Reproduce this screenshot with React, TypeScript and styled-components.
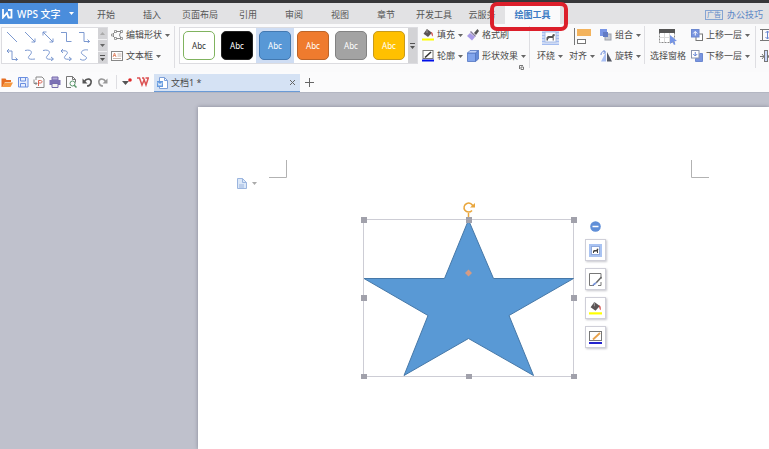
import React from 'react';
import styled, { createGlobalStyle } from 'styled-components';

const GlobalStyle = createGlobalStyle`
  * { box-sizing: border-box; }
  body {
    margin: 0;
    overflow: hidden;
    font-family: "Noto Sans", "Noto Sans CJK SC", sans-serif;
    font-size: 9px;
    line-height: 12px;
    color: #4a4a4a;
  }
  button {
    font: inherit;
    color: inherit;
    border: 0;
    padding: 0;
    margin: 0;
    background: none;
    cursor: pointer;
    white-space: nowrap;
  }
  svg { display: block; flex: none; }
`;

const Window = styled.div`
  display: flex;
  flex-direction: column;
  min-height: 100vh;
  overflow: hidden;
  background: #bfc1cc;
`;

const TabBar = styled.nav`
  display: flex;
  height: 24px;
  border-top: 3px solid #373739;
  background: #e2e2e4;
`;

const AppButton = styled.button`
  display: flex;
  align-items: center;
  gap: 4px;
  width: 78px;
  flex: none;
  padding-left: 2px;
  background: #4a8ddc;
  color: #fff;
  font-size: 10px;
  font-weight: 500;
`;

const AppName = styled.span`
  flex: 1;
  text-align: left;
`;

const AppArrow = styled.span`
  width: 9px;
`;

const Tabs = styled.div`
  display: flex;
  flex: 1;
  padding-left: 5px;
`;

const Tab = styled.button<{ $w: number; $active?: boolean }>`
  position: relative;
  width: ${p => p.$w}px;
  height: 21px;
  padding-top: 2px;
  color: ${p => (p.$active ? '#3d7cc4' : '#555')};
  font-weight: ${p => (p.$active ? 700 : 400)};
  background: ${p => (p.$active ? '#fafafb' : 'none')};
`;

const Marker = styled.span`
  position: absolute;
  z-index: 2;
  left: -15px;
  top: -1px;
  width: 78px;
  height: 29px;
  border: 4px solid #dc1f2b;
  border-radius: 7px;
  pointer-events: none;
`;

const Promo = styled.a`
  display: flex;
  align-items: center;
  gap: 4px;
  padding: 2px 6px 0 0;
  color: #5c86c6;
  text-decoration: none;
  white-space: nowrap;
`;

const PromoTag = styled.span`
  padding: 0 1px;
  border: 1px solid #86a5d3;
  font-size: 7px;
  line-height: 8px;
`;

const Ribbon = styled.section`
  display: flex;
  align-items: flex-start;
  height: 48px;
  padding: 2px 0 0 1px;
  overflow: hidden;
  background: #fafafb;
`;

const Gallery = styled.div`
  display: flex;
  flex: none;
  height: 37px;
  margin-top: 1px;
  border: 1px solid #dcdce0;
  background: #fff;
`;

const ConnectorGrid = styled.div`
  display: grid;
  grid-template-columns: repeat(5, 18px);
  grid-template-rows: 18px 18px;
  width: 96px;
  padding-left: 1px;
`;

const ConnectorButton = styled.button`
  display: grid;
  place-items: center;
`;

const Scroller = styled.div`
  display: grid;
  grid-auto-rows: 1fr;
  gap: 1px;
  width: 9px;
  background: #f1f1f3;
`;

const ScrollButton = styled.button`
  display: grid;
  place-items: center;
  background: #d3d3d6;
`;

const Divider = styled.span<{ $h?: number }>`
  flex: none;
  width: 1px;
  height: ${p => p.$h ?? 42}px;
  background: #dedee2;
`;

const Stack = styled.div<{ $ml?: number; $mr?: number }>`
  display: grid;
  flex: none;
  grid-auto-rows: 20px;
  row-gap: 1px;
  align-content: start;
  justify-items: start;
  margin-left: ${p => p.$ml ?? 4}px;
  margin-right: ${p => p.$mr ?? 4}px;
`;

const Command = styled.button`
  display: flex;
  align-items: center;
  gap: 3px;
  height: 18px;
`;

const BigCommand = styled.button<{ $ml: number }>`
  display: grid;
  flex: none;
  grid-template-rows: 20px 18px;
  row-gap: 1px;
  justify-items: center;
  align-items: center;
  margin-left: ${p => p.$ml}px;
`;

const BigLabel = styled.span`
  display: flex;
  align-items: center;
  gap: 3px;
`;

const Swatch = styled.button<{ $fill: string; $edge: string; $ink?: string }>`
  width: 32px;
  height: 29px;
  border: 1px solid ${p => p.$edge};
  border-radius: 5px;
  background: ${p => p.$fill};
  color: ${p => p.$ink ?? '#fff'};
  font-size: 8px;
`;

const SwatchCell = styled.div<{ $selected?: boolean }>`
  display: grid;
  place-items: center;
  width: 38px;
  background: ${p => (p.$selected ? '#cfddf3' : 'transparent')};
`;

const EffectsGroup = styled.div`
  display: flex;
  flex: none;
  flex-direction: column;
  align-items: flex-end;
  width: 111px;
  padding: 0 5px 0 4px;
`;

const EffectsGrid = styled.div`
  display: grid;
  grid-template-columns: 45px 57px;
  grid-template-rows: 20px 18px;
  row-gap: 1px;
`;

const Launcher = styled.button`
  width: 5px;
  height: 5px;
`;

const DocBar = styled.div`
  display: flex;
  align-items: center;
  height: 20px;
  background: #fbfbfc;
`;

const QuickTools = styled.div`
  display: flex;
  align-items: center;
  gap: 4px;
  padding-left: 1px;
  width: 114px;
  flex: none;
`;

const QuickMenu = styled.div`
  display: flex;
  align-items: center;
  justify-content: space-between;
  width: 40px;
  flex: none;
  padding: 0 5px 0 2px;
`;

const DocTab = styled.div`
  display: flex;
  align-items: center;
  gap: 3px;
  width: 146px;
  height: 18px;
  margin-top: 2px;
  padding: 0 4px 0 3px;
  border-bottom: 1px solid #6a9ad6;
  background: #d5e2f4;
`;

const DocName = styled.span`
  flex: 1;
`;

const AddTab = styled.button`
  margin-left: 5px;
`;

const Workspace = styled.main`
  display: flex;
  flex: 1;
  padding: 14px 0 0 198px;
  border-top: 1px solid #b3b6c2;
`;

const Sheet = styled.article`
  position: relative;
  flex: 1;
  background: #fff;
  box-shadow: 0 0 4px #858896;
`;

const Placed = styled.div<{ $x: number; $y: number }>`
  position: absolute;
  left: ${p => p.$x}px;
  top: ${p => p.$y}px;
`;

const PasteOptions = styled.button`
  display: flex;
  align-items: center;
  gap: 5px;
`;

const FloatTools = styled.div`
  display: flex;
  flex-direction: column;
  align-items: center;
  gap: 7px;
`;

const FloatButton = styled.button`
  display: grid;
  place-items: center;
  width: 21px;
  height: 22px;
  border: 1px solid #cfcfd8;
  background: #fff;
  box-shadow: 1px 1px 2px #c8c8ce;
`;

const Collapse = styled.button`
  width: 11px;
  height: 11px;
`;

const Caret = ({ color = '#666' }: { color?: string }) => (
  <svg width="5" height="3" viewBox="0 0 5 3"><path d="M0 0h5L2.500 3z" fill={color} /></svg>
);

const MoreArrow = () => (
  <svg width="5" height="6" viewBox="0 0 5 6" fill="#555"><path d="M0 0h5v1H0zM0 3h5L2.500 6z" /></svg>
);

const connectors = [
  { name: '直线', d: 'M1 1L11 11' },
  { name: '箭头', d: 'M1 1L11 11M11 7.500V11H7.500' },
  { name: '双箭头', d: 'M1 1L11 11M11 7.500V11H7.500M1 4.500V1H4.500' },
  { name: '肘形', d: 'M1 1.500H6.500V10.500H11.500' },
  { name: '肘形箭头', d: 'M1 1.500H6V10.500H11.500M9.500 8.500L11.500 10.500L9.500 12' },
  { name: '肘形双箭头', d: 'M1 2H6V10.500H11.500M9.500 8.500L11.500 10.500L9.500 12M3 0L1 2L3 4' },
  { name: '曲线', d: 'M1 1.500C7 0 9 3 6 6S4 11 11 10' },
  { name: '曲线箭头', d: 'M1 1.500C7 0 9 3 6 6S4 11 11 10M9 8L11.500 10L9 12' },
  { name: '曲线双箭头', d: 'M1 2C7 1 9 3 6 6S4 11 11 10M9 8L11.500 10L9 12M3 0L1 2L3 4' },
  { name: '自由曲线', d: 'M10 1C5 0 2 3 4 5S10 8 8 10S3 11 2 10' },
];

const WrapIcon = () => (
  <svg width="17" height="17" viewBox="0 0 17 17">
    <path d="M0 1.500h17M0 4.500h17M0 7.500h17M0 10.500h17M0 13.500h17M0 16.500h17" stroke="#a3bcf0" strokeWidth="2" />
    <rect x="3" y="4" width="11" height="10" fill="#fff" stroke="#a9bde6" />
    <path d="M4.500 12.500V9.500L6 8h4l1-2 2 .5-.5 1.500-.8.500v4h-1V10H7.500L6 11v1.500z" fill="#555" />
  </svg>
);

const WrapSmallIcon = () => (
  <svg width="13" height="13" viewBox="0 0 13 13">
    <rect x="1" y="1" width="11" height="11" fill="#fff" stroke="#a9c3f2" strokeWidth="2" />
    <rect x="2.500" y="2.500" width="8" height="8" fill="#fff" stroke="#8fa9dc" />
    <path d="M4 9V7l1-1h2.500L8 4.500l1.500.5L9 6v3H8V7.500H6L5 8v1z" fill="#444" />
  </svg>
);

const BucketIcon = ({ size = 12 }: { size?: number }) => (
  <svg width={size} height={size} viewBox="0 0 12 12">
    <path d="M5 0l5 3.800L6 8 1.500 4.800z" fill="#5b5555" />
    <path d="M5 0v4" stroke="#999" />
    <path d="M9 3c2 .5 2 2 1.800 4.500C9.500 7 9.500 5 9 3z" fill="#d34d49" />
    <path d="M0 10.500h12" stroke="#ff0" strokeWidth="2" />
  </svg>
);

const OutlineIcon = () => (
  <svg width="12" height="12" viewBox="0 0 12 12">
    <rect x="1" y=".5" width="10" height="8" fill="#fff" stroke="#777" />
    <path d="M3 7.500L9 2" stroke="#333" strokeWidth="1.600" />
    <path d="M0 10.500h12" stroke="#0010e8" strokeWidth="2" />
  </svg>
);

const BrushIcon = () => (
  <svg width="12" height="12" viewBox="0 0 12 12">
    <path d="M7 4L10.500 0L12 2L9 6z" fill="#555" />
    <path d="M4 2l5 5-1 1-5-5z" fill="#857d9c" />
    <path d="M3 4l5 4-3 3.500L0 7z" fill="#a99be8" />
  </svg>
);

const CubeIcon = () => (
  <svg width="12" height="12" viewBox="0 0 12 12" stroke="#5376c2" strokeWidth=".8">
    <path d="M.5 3h8v8.500h-8z" fill="#82a5ec" />
    <path d="M.5 3L3 .5h8.500L8.500 3z" fill="#c1d3fa" />
    <path d="M8.500 3l3-2.500V9l-3 2.500z" fill="#658bd8" />
  </svg>
);

const EditShapeIcon = () => (
  <svg width="12" height="12" viewBox="0 0 12 12" fill="none" stroke="#777" strokeWidth=".9">
    <path d="M1 6l3.500-3.500H10L8.500 6 10 9.500H4.500z" />
    <path d="M3.500 1.500h2v2h-2zM3.500 8.500h2v2h-2zM9.500 1.500h2v2h-2zM9.500 8.500h2v2h-2zM.5 5h2v2h-2z" fill="#fafafb" strokeWidth=".7" />
  </svg>
);

const TextBoxIcon = () => (
  <svg width="12" height="12" viewBox="0 0 12 12" fill="none">
    <rect x=".5" y="1.500" width="11" height="9" fill="#fff" stroke="#888" />
    <path d="M2 7l1.500-4L5 7M2.500 5.500h2" stroke="#e28b6c" />
    <path d="M6.500 4h4M6.500 6h4M2 8.500h8" stroke="#c8b8b0" />
  </svg>
);

const AlignIcon = () => (
  <svg width="17" height="17" viewBox="0 0 17 17">
    <path d="M.5 0v17" stroke="#777" />
    <rect x="3" y="1" width="14" height="7" fill="#f3b35d" />
    <rect x="3.500" y="11.500" width="8" height="4" fill="#fff" stroke="#777" />
  </svg>
);

const GroupIcon = () => (
  <svg width="12" height="12" viewBox="0 0 12 12">
    <rect x="0" y="0" width="7" height="7" fill="#7995e6" />
    <rect x="5" y="5" width="6" height="6" fill="#c9ccd3" stroke="#9ca0aa" />
    <rect x="3" y="3" width="5" height="5" fill="#627bc4" />
  </svg>
);

const RotateIcon = () => (
  <svg width="12" height="12" viewBox="0 0 12 12">
    <path d="M6 2v9.500H1z" fill="#a9bff4" />
    <path d="M7 2l5 9.500H7z" fill="#535762" />
    <path d="M1 5c0-3 2-4 4-3M3.500 0L5.500 2L3.500 4" fill="none" stroke="#6687d7" />
  </svg>
);

const PaneIcon = () => (
  <svg width="18" height="17" viewBox="0 0 18 17">
    <rect x=".5" y="1.500" width="15" height="13" fill="#fff" stroke="#888" strokeDasharray="2 1" />
    <path d="M0 1h16v4H0z" fill="#555" />
    <path d="M5.500 5v9M10.500 5v9M1 9.500h14" stroke="#dadada" />
    <path d="M11 7l7 6-3 .3 1.500 3-1.500.7-1.500-3-2.500 2z" fill="#7695e6" />
  </svg>
);

const LayerIcon = ({ down }: { down?: boolean }) => (
  <svg width="12" height="12" viewBox="0 0 12 12">
    {down && <path d="M8.500 3.500h3v8h-7v-3" fill="#7894e0" stroke="#6c88d0" />}
    {!down && <rect x="5" y="5" width="6.500" height="6.500" fill="#fff" stroke="#777" />}
    <rect x=".5" y=".5" width="7.500" height="7.500" fill={down ? '#fff' : '#7894e0'} stroke={down ? '#8a94ac' : '#6c88d0'} />
    <path d={down ? 'M4.250 2v4M2.250 4l2 2 2-2' : 'M2.250 4.500l2-2 2 2M4.250 2.500v4'} fill="none" stroke={down ? '#6685d5' : '#fff'} />
  </svg>
);

const HeightIcon = () => (
  <svg width="12" height="12" viewBox="0 0 12 12" fill="none" stroke="#777">
    <path d="M0 .5h12M0 11.500h12M2.500 1v10" />
    <path d="M7.500 2v8M5.500 4l2-2 2 2M5.500 8l2 2 2-2" stroke="#6786d0" />
  </svg>
);

const WidthIcon = () => (
  <svg width="12" height="12" viewBox="0 0 12 12" fill="none" stroke="#777">
    <path d="M0 6.500h4M8 6.500h4M2 4l2 2.500L2 9M10 4L8 6.500L10 9" />
    <rect x="4.500" y=".5" width="3" height="11" fill="#cad8fa" />
  </svg>
);

const OpenIcon = () => (
  <svg width="12" height="12" viewBox="0 0 12 12">
    <path d="M.5 11V2.500h4l1 1.500H10v2H4L1.500 11z" fill="#e56e22" />
    <path d="M3.500 6.500H12L9.500 11h-8z" fill="#f6973e" />
  </svg>
);
const SaveIcon = () => (
  <svg width="12" height="12" viewBox="0 0 12 12" fill="none" stroke="#6b8fe0">
    <path d="M1.500 1.500h9l.5 1v8.500H1.500z" fill="#e8effd" /><path d="M3.500 1.500V5h5V1.500M3.500 11V7.500h5V11" />
  </svg>
);
const PdfIcon = () => (
  <svg width="12" height="12" viewBox="0 0 12 12" fill="none" stroke="#888">
    <path d="M3 4V1h6l2 2v8.500H3" /><path d="M5.500 10V4.500h2c2 0 2 2.500 0 2.500h-2" stroke="#dc6250" /><path d="M1 3.500v4h3M2.500 6L4 7.500 2.500 9" />
  </svg>
);
const PrintIcon = () => (
  <svg width="12" height="12" viewBox="0 0 12 12">
    <path d="M3 1h6v3H3z" fill="#b4abd9" stroke="#766bac" /><path d="M.5 4h11v5H.5z" fill="#7b70b4" /><path d="M3 7.500h6v4H3z" fill="#eee" stroke="#766bac" />
  </svg>
);
const PreviewIcon = () => (
  <svg width="12" height="12" viewBox="0 0 12 12" fill="none" stroke="#777">
    <path d="M6 11.500H1.500V.5h6l3 3v3M7.500.5v3h3" /><circle cx="7.500" cy="7.500" r="2.500" stroke="#5a966b" /><path d="M9 9l2.500 2.500" stroke="#5a966b" strokeWidth="1.500" />
  </svg>
);
const UndoIcon = ({ redo }: { redo?: boolean }) => (
  <svg width="12" height="12" viewBox="0 0 12 12">
    <g transform={redo ? 'translate(12 0) scale(-1 1)' : undefined}>
      <path d="M3 6C6 1 11 3 10 7c-.4 1.700-2 3-4 3" fill="none" stroke={redo ? '#999' : '#555'} strokeWidth="1.600" />
      <path d="M1.500 2.500v5h5z" fill={redo ? '#999' : '#555'} />
    </g>
  </svg>
);

const fileTools = [
  { name: '打开', icon: <OpenIcon /> },
  { name: '保存', icon: <SaveIcon /> },
  { name: '输出为PDF', icon: <PdfIcon /> },
  { name: '打印', icon: <PrintIcon /> },
  { name: '打印预览', icon: <PreviewIcon /> },
  { name: '撤销', icon: <UndoIcon /> },
  { name: '恢复', icon: <UndoIcon redo /> },
];

const DocumentIcon = () => (
  <svg width="11" height="12" viewBox="0 0 11 12">
    <path d="M2.500.5h5l3 3v8h-8z" fill="#fff" stroke="#7d9fd8" /><path d="M7.500.5v3h3" fill="none" stroke="#7d9fd8" />
    <path d="M0 4h6v6H0z" fill="#659be0" /><path d="M1 5.500l1 3 1-2 1 2 1-3" fill="none" stroke="#fff" strokeWidth=".8" />
  </svg>
);

const tabs = [
  { label: '开始', w: 46 }, { label: '插入', w: 46 }, { label: '页面布局', w: 50 },
  { label: '引用', w: 46 }, { label: '审阅', w: 46 }, { label: '视图', w: 46 },
  { label: '章节', w: 46 }, { label: '开发工具', w: 50 }, { label: '云服务', w: 46 },
];

const swatches = [
  { fill: '#fff', edge: '#80b35f', ink: '#333' },
  { fill: '#000', edge: '#222' },
  { fill: '#5898d6', edge: '#4379b1', selected: true },
  { fill: '#ef7b2e', edge: '#bb6429' },
  { fill: '#a3a3a3', edge: '#828282' },
  { fill: '#ffc000', edge: '#c79a1c' },
];

const handles = [[3, 3], [108, 3], [213, 3], [3, 81], [213, 81], [3, 160], [108, 160], [213, 160]];

const Item = ({ icon, label, menu = true }: { icon: React.ReactNode; label: string; menu?: boolean }) => (
  <Command>{icon}<span>{label}</span>{menu && <Caret />}</Command>
);

export default function App() {
  return (
    <Window>
      <GlobalStyle />
      <TabBar>
        <AppButton>
          <svg width="11" height="10" viewBox="0 0 11 10" fill="none" stroke="#fff" strokeWidth="1.800">
            <path d="M1 0v8.500L5 4l1.500 4.500H9.500V1H6" />
          </svg>
          <AppName>WPS 文字</AppName>
          <AppArrow><Caret color="#fff" /></AppArrow>
        </AppButton>
        <Tabs>
          {tabs.map(t => <Tab key={t.label} $w={t.w}>{t.label}</Tab>)}
          <Tab $w={55} $active>绘图工具<Marker /></Tab>
        </Tabs>
        <Promo href="#tips"><PromoTag>广告</PromoTag>办公技巧</Promo>
      </TabBar>

      <Ribbon>
        <Gallery>
          <ConnectorGrid>
            {connectors.map(c => (
              <ConnectorButton key={c.name} aria-label={c.name}>
                <svg width="12" height="12" viewBox="0 0 12 12" fill="none" stroke="#6d8dcb" strokeWidth=".9"><path d={c.d} /></svg>
              </ConnectorButton>
            ))}
          </ConnectorGrid>
          <Scroller>
            <ScrollButton aria-label="向上"><svg width="5" height="3" viewBox="0 0 5 3"><path d="M0 3h5L2.500 0z" fill="#aaa" /></svg></ScrollButton>
            <ScrollButton aria-label="向下"><Caret /></ScrollButton>
            <ScrollButton aria-label="更多形状"><MoreArrow /></ScrollButton>
          </Scroller>
        </Gallery>
        <Stack $ml={3} $mr={4}>
          <Item icon={<EditShapeIcon />} label="编辑形状" />
          <Item icon={<TextBoxIcon />} label="文本框" />
        </Stack>
        <Divider />
        <Stack $ml={4} $mr={0}>
          <Gallery>
            {swatches.map(s => (
              <SwatchCell key={s.fill} $selected={s.selected}>
                <Swatch $fill={s.fill} $edge={s.edge} $ink={s.ink}>Abc</Swatch>
              </SwatchCell>
            ))}
            <Scroller><ScrollButton aria-label="更多样式"><MoreArrow /></ScrollButton></Scroller>
          </Gallery>
        </Stack>
        <EffectsGroup>
          <EffectsGrid>
            <Item icon={<BucketIcon />} label="填充" />
            <Item icon={<BrushIcon />} label="格式刷" menu={false} />
            <Item icon={<OutlineIcon />} label="轮廓" />
            <Item icon={<CubeIcon />} label="形状效果" />
          </EffectsGrid>
          <Launcher aria-label="设置形状格式">
            <svg width="5" height="5" viewBox="0 0 5 5" fill="none" stroke="#777"><path d="M.5 4V.5H4M2 2h2.500v2.500H2z" /></svg>
          </Launcher>
        </EffectsGroup>
        <Divider />
        <BigCommand $ml={7}><WrapIcon /><BigLabel>环绕<Caret /></BigLabel></BigCommand>
        <BigCommand $ml={6}><AlignIcon /><BigLabel>对齐<Caret /></BigLabel></BigCommand>
        <Stack $ml={5} $mr={3}>
          <Item icon={<GroupIcon />} label="组合" />
          <Item icon={<RotateIcon />} label="旋转" />
        </Stack>
        <Divider $h={38} />
        <BigCommand $ml={5}><PaneIcon /><BigLabel>选择窗格</BigLabel></BigCommand>
        <Stack $ml={5} $mr={5}>
          <Item icon={<LayerIcon />} label="上移一层" />
          <Item icon={<LayerIcon down />} label="下移一层" />
        </Stack>
        <Divider />
        <Stack $ml={4}>
          <Command aria-label="高度"><HeightIcon /></Command>
          <Command aria-label="宽度"><WidthIcon /></Command>
        </Stack>
      </Ribbon>

      <DocBar>
        <QuickTools>
          {fileTools.map(t => <button key={t.name} aria-label={t.name}>{t.icon}</button>)}
        </QuickTools>
        <QuickMenu>
          <Divider $h={14} />
          <button aria-label="自定义快速访问">
            <svg width="10" height="8" viewBox="0 0 10 8"><path d="M0 3h7L3.500 7z" fill="#555" /><circle cx="8" cy="2" r="1.800" fill="#e02a2a" /></svg>
          </button>
          <button aria-label="WPS">
            <svg width="12" height="10" viewBox="0 0 12 10" fill="none" stroke="#dc5354" strokeWidth="1.500"><path d="M0 1h2.500L5 8l2.500-6M5 1h1.500L9 8l2.300-7H8.500" /></svg>
          </button>
        </QuickMenu>
        <DocTab>
          <DocumentIcon />
          <DocName>文档1 *</DocName>
          <button aria-label="关闭文档"><svg width="7" height="7" viewBox="0 0 7 7"><path d="M1 1l5 5M6 1L1 6" stroke="#666" /></svg></button>
        </DocTab>
        <AddTab aria-label="新建文档"><svg width="9" height="9" viewBox="0 0 9 9"><path d="M4.500 0v9M0 4.500h9" stroke="#666" /></svg></AddTab>
      </DocBar>

      <Workspace>
        <Sheet>
          <Placed $x={71} $y={53}><svg width="18" height="18" viewBox="0 0 18 18"><path d="M0 17.500h17.500V0" fill="none" stroke="#b2b2b2" /></svg></Placed>
          <Placed $x={493} $y={53}><svg width="18" height="18" viewBox="0 0 18 18"><path d="M.5 0v17.500H18" fill="none" stroke="#b2b2b2" /></svg></Placed>
          <Placed $x={39} $y={70}>
            <PasteOptions aria-label="粘贴选项">
              <svg width="10" height="12" viewBox="0 0 10 12"><path d="M.5 1.500h5l4 4v6h-9z" fill="#dce8f8" stroke="#9bb5df" /><path d="M5.500 1.500v4h4M2 8h5M2 10h5" fill="none" stroke="#9bb5df" /></svg>
              <Caret color="#aaa" />
            </PasteOptions>
          </Placed>
          <Placed $x={162} $y={92}>
            <svg width="217" height="180" viewBox="0 -17 217 180">
              <rect x="3.500" y="3.500" width="210" height="157" fill="none" stroke="#cdcdd5" />
              <path d="M108.500 4L133.500 62.500H213.500L149 99.500L173.500 159.500L108.500 122.500L44 159.500L68 99.500L4 62.500H84.500Z" fill="#5999d5" stroke="#4678a8" />
              {handles.map(([x, y]) => <rect key={`${x}-${y}`} x={x - 2} y={y - 2} width="6" height="6" fill="#a1a1ab" />)}
              <path d="M108.500 53.500l3.500 3.500-3.500 3.500-3.500-3.500z" fill="#d49b84" />
              <path d="M108.500-3v4M112-5.500A4.500 4.500 0 1 1 113-9" fill="none" stroke="#e9a63c" strokeWidth="1.500" />
              <path d="M110-8.500h5v-4.500z" fill="#e9a63c" />
            </svg>
          </Placed>
          <Placed $x={387} $y={114}>
            <FloatTools>
              <Collapse aria-label="收起"><svg width="11" height="11" viewBox="0 0 11 11"><circle cx="5.500" cy="5.500" r="5.300" fill="#608fd8" /><path d="M2.500 5.500h6" stroke="#fff" strokeWidth="1.500" /></svg></Collapse>
              <FloatButton aria-label="环绕方式"><WrapSmallIcon /></FloatButton>
              <FloatButton aria-label="形状样式">
                <svg width="13" height="13" viewBox="0 0 13 13" fill="none"><path d="M12 6V.5H.5v12H5M9 12.500h3V9" stroke="#777" /><path d="M12.500 4L7 10" stroke="#666" strokeWidth="1.500" /><path d="M8 9l-2 3-3 .5L5 10z" fill="#7895dc" /></svg>
              </FloatButton>
              <FloatButton aria-label="填充颜色"><BucketIcon size={13} /></FloatButton>
              <FloatButton aria-label="轮廓颜色">
                <svg width="13" height="13" viewBox="0 0 13 13"><rect x=".5" y=".5" width="12" height="9" fill="#fff" stroke="#777" /><path d="M4 8.500L11 2" stroke="#e9a24c" strokeWidth="1.800" /><path d="M0 12h13" stroke="#2525cf" strokeWidth="2" /></svg>
              </FloatButton>
            </FloatTools>
          </Placed>
        </Sheet>
      </Workspace>
    </Window>
  );
}
